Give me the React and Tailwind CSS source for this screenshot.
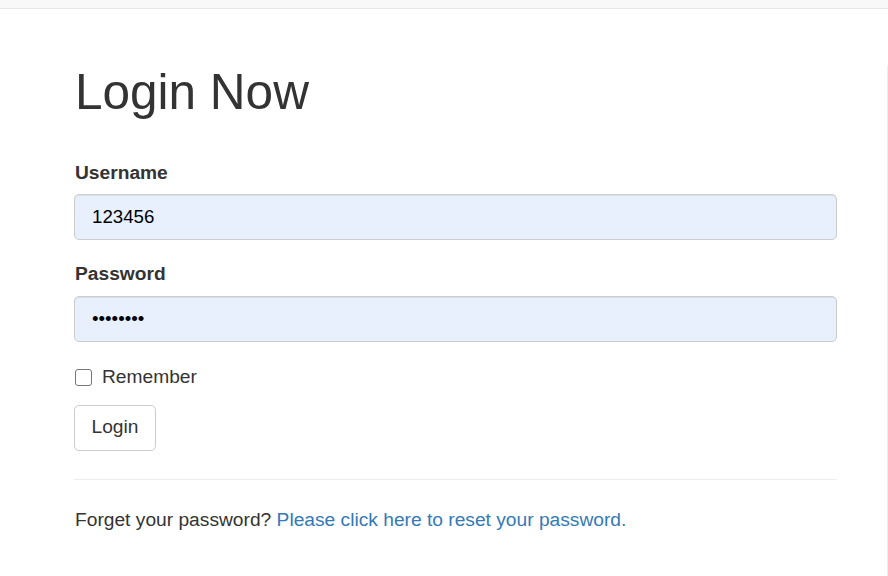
import { useState } from "react";

export default function App() {
  const [username, setUsername] = useState("123456");
  const [password, setPassword] = useState("12345678");
  const [remember, setRemember] = useState(false);

  return (
    <div className="h-[576px] overflow-hidden bg-white font-['Liberation_Sans',Arial,sans-serif] text-[#333] text-[19.2px] leading-[26.67px]">
      <div className="h-[9px] bg-[#f8f8f8] border-b border-[#e7e7e7]" />
      <div className="w-[888px] h-[567px] border-r border-[#eee] pl-[74px]">
        <h1 className="mt-[57px] ml-px text-[49.5px] leading-[52.8px] font-normal">Login Now</h1>

        <form onSubmit={(e) => e.preventDefault()} className="mt-[41px] w-[763px]">
          <div className="mb-[21px]">
            <label className="block ml-px font-bold mb-[8px]">Username</label>
            <input
              value={username}
              onChange={(e) => setUsername(e.target.value)}
              className="w-full h-[46px] px-[17px] rounded-[5px] border border-[#ccc] bg-[#e8f0fe] text-black text-[18.67px] outline-none shadow-[inset_0_1px_1px_rgba(0,0,0,0.075)]"
            />
          </div>
          <div>
            <label className="block ml-px font-bold mb-[8px]">Password</label>
            <input
              type="password"
              value={password}
              onChange={(e) => setPassword(e.target.value)}
              className="w-full h-[46px] px-[17px] rounded-[5px] border border-[#ccc] bg-[#e8f0fe] text-black text-[18.67px] outline-none shadow-[inset_0_1px_1px_rgba(0,0,0,0.075)]"
            />
          </div>

          <label className="mt-[22px] ml-px flex items-center gap-[10px] h-[26.67px]">
            <input
              type="checkbox"
              checked={remember}
              onChange={(e) => setRemember(e.target.checked)}
              className="appearance-none w-[17px] h-[17px] rounded-[3px] border border-[#767676] bg-white checked:bg-[#0075ff]"
            />
            <span>Remember</span>
          </label>

          <button
            type="submit"
            className="mt-[14px] w-[82px] h-[46px] rounded-[5px] border border-[#ccc] bg-white text-[#333]"
          >
            Login
          </button>
        </form>

        <hr className="mt-[28px] w-[763px] border-0 border-t border-[#eee]" />

        <p className="mt-[27px] ml-px">
          Forget your password?{" "}
          <a href="#" className="text-[#337ab7]">Please click here to reset your password.</a>
        </p>
      </div>
    </div>
  );
}
